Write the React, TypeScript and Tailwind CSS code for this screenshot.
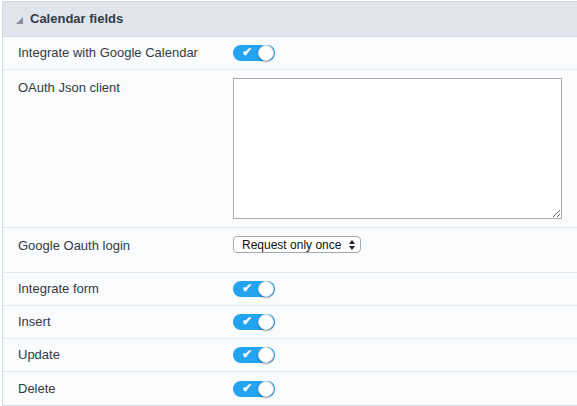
import React from "react";

const Toggle = () => (
  <div className="relative w-[42px] h-[16px] rounded-full bg-[#22a4f1]">
    <span className="absolute left-[9px] top-[-1px] text-white text-[12px] leading-[16px] font-bold">✔</span>
    <span className="absolute right-[1px] top-[0px] w-[16px] h-[16px] rounded-full bg-white shadow-[0_1px_2px_rgba(0,0,0,0.35)] border border-[#d8dde3]" />
  </div>
);

const Row = ({
  label,
  children,
  className = "",
}: {
  label: string;
  children: React.ReactNode;
  className?: string;
}) => (
  <div className={`flex border-b border-[#e6e9ee] bg-[#fafbfc] ${className}`}>
    <div className="w-[230px] pl-[15px] text-[13px] text-[#333a44]">{label}</div>
    <div className="flex-1">{children}</div>
  </div>
);

export default function App() {
  const toggles = ["Integrate form", "Insert", "Update", "Delete"];
  return (
    <div
      className="w-[577px] h-[406px] bg-white pt-[1px]"
      style={{ fontFamily: "'Liberation Sans', Arial, sans-serif" }}
    >
      <div className="ml-[2px] border-l border-[#d3d9e1] border-b border-b-[#d3d9e1]">
        <div className="h-[36px] flex items-center bg-[#e0e4ec] border-t border-b border-[#d3d9e1] pl-[13px]">
          <svg width="7" height="7" viewBox="0 0 7 7" className="mr-[7px] mt-[2px]">
            <polygon points="7,0 7,7 0,7" fill="#8a909a" />
          </svg>
          <span className="text-[13px] font-bold text-[#353b46]">Calendar fields</span>
        </div>

        <Row label="Integrate with Google Calendar" className="h-[33px] items-center">
          <Toggle />
        </Row>

        <Row label="OAuth Json client" className="h-[158px] pt-[8px]">
          <textarea className="block w-[329px] h-[141px] border border-[#a9abb0] bg-white resize-y outline-none" />
        </Row>

        <Row label="Google Oauth login" className="h-[45px] pt-[8px]">
          <div className="w-[128px] h-[17px] border border-[#a5a8ae] rounded-[4px] bg-white flex items-center justify-between pl-[8px] pr-[5px] text-[12px] text-[#111]">
            <span>Request only once</span>
            <svg width="6" height="10" viewBox="0 0 6 10">
              <polygon points="3,0 6,4 0,4" fill="#222" />
              <polygon points="0,6 6,6 3,10" fill="#222" />
            </svg>
          </div>
        </Row>

        {toggles.map((t, i) => (
          <Row
            key={t}
            label={t}
            className={`h-[33px] items-center ${i === toggles.length - 1 ? "border-b-0" : ""}`}
          >
            <Toggle />
          </Row>
        ))}
      </div>
    </div>
  );
}
